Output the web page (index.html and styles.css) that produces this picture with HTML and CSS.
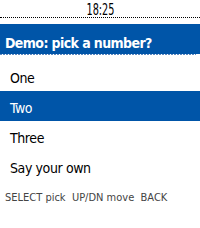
FILE: index.html
```html
<!DOCTYPE html>
<html lang="en">

<head>
  <meta charset="UTF-8">
  <meta name="viewport" content="width=device-width, initial-scale=1.0">
  <title>menu</title>
  <link rel="stylesheet" href="styles.css">
</head>

<body>
  <div class="screen">
    <div class="status">
      <span class="time">18:25</span>
    </div>
    <div class="title">Demo: pick a number?</div>
    <div class="title-rule"></div>
    <ul class="menu">
      <li class="item">One</li>
      <li class="item selected">Two</li>
      <li class="item">Three</li>
      <li class="item">Say your own</li>
    </ul>
    <div class="hints">SELECT pick&nbsp; UP/DN move&nbsp; BACK</div>
  </div>
</body>

</html>
```

FILE: styles.css
```css
body {
  margin: 0;
  background: #fff;
  font-family: "DejaVu Sans Condensed", "DejaVu Sans", sans-serif;
}

.screen {
  width: 200px;
  height: 228px;
  overflow: hidden;
}

.status {
  height: 17px;
  border-bottom: 1px dotted #000;
  text-align: center;
}

.time {
  display: inline-block;
  font-size: 15px;
  line-height: 19px;
  height: 17px;
  color: #000;
  transform: scaleX(0.72);
}

.title {
  margin-top: 6px;
  height: 20px;
  padding: 9px 0 1px 5px;
  line-height: 20px;
  background: #0055a8;
  color: #fff;
  font-size: 14px;
  font-weight: bold;
  letter-spacing: -0.6px;
}

.title-rule {
  height: 1px;
  margin-right: 4px;
  background-image: linear-gradient(to right, #5a88c0 2px, transparent 2px);
  background-size: 3px 1px;
}

.menu {
  list-style: none;
  margin: 6px 0 0;
  padding: 0;
}

.item {
  height: 26px;
  padding: 4px 0 0 10px;
  line-height: 26px;
  font-size: 14px;
  letter-spacing: -0.4px;
  color: #000;
}

.selected {
  background: #0055a8;
  color: #fff;
}

.hints {
  margin-top: 10px;
  padding-left: 5px;
  line-height: 13px;
  font-size: 11px;
  color: #444;
}
```
